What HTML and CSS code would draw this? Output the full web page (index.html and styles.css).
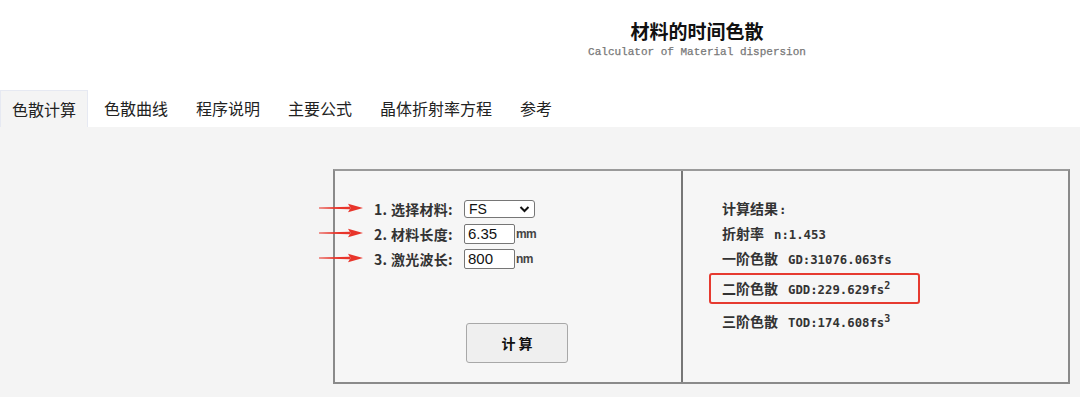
FILE: index.html
```html
<!DOCTYPE html>
<html lang="zh">
<head>
<meta charset="utf-8">
<title>材料的时间色散</title>
<link rel="stylesheet" href="styles.css">
</head>
<body>
<header class="header">
  <h1 class="title">材料的时间色散</h1>
  <div class="subtitle">Calculator of Material dispersion</div>
</header>
<nav class="tabs">
  <div class="tab active">色散计算</div>
  <div class="tab">色散曲线</div>
  <div class="tab">程序说明</div>
  <div class="tab">主要公式</div>
  <div class="tab">晶体折射率方程</div>
  <div class="tab">参考</div>
</nav>
<main class="main">
  <div class="box">
    <div class="cell inputs">
      <div class="row">
        <svg class="arrow" width="44" height="10" viewBox="0 0 44 10"><path d="M0 4.6 L31 3.8 L31 6.2 L0 5.4 Z" fill="#e8352b"/><path d="M29 0.8 L44 5 L29 9.2 L31.5 5 Z" fill="#e8352b"/></svg>
        <span class="label">1. 选择材料:</span>
        <div class="select"><span>FS</span><svg width="11" height="8" viewBox="0 0 11 8"><path d="M1.5 2 L5.5 6 L9.5 2" fill="none" stroke="#111" stroke-width="2"/></svg></div>
      </div>
      <div class="row">
        <svg class="arrow" width="44" height="10" viewBox="0 0 44 10"><path d="M0 4.6 L31 3.8 L31 6.2 L0 5.4 Z" fill="#e8352b"/><path d="M29 0.8 L44 5 L29 9.2 L31.5 5 Z" fill="#e8352b"/></svg>
        <span class="label">2. 材料长度:</span>
        <div class="field">6.35</div><span class="unit">mm</span>
      </div>
      <div class="row">
        <svg class="arrow" width="44" height="10" viewBox="0 0 44 10"><path d="M0 4.6 L31 3.8 L31 6.2 L0 5.4 Z" fill="#e8352b"/><path d="M29 0.8 L44 5 L29 9.2 L31.5 5 Z" fill="#e8352b"/></svg>
        <span class="label">3. 激光波长:</span>
        <div class="field">800</div><span class="unit">nm</span>
      </div>
      <button class="calc">计 算</button>
    </div>
    <div class="cell results">
      <div class="line">计算结果<span class="c">:</span></div>
      <div class="line">折射率<span class="v">n:1.453</span></div>
      <div class="line">一阶色散<span class="v">GD:31076.063fs</span></div>
      <div class="line hl">二阶色散<span class="v">GDD:229.629fs<sup>2</sup></span></div>
      <div class="line">三阶色散<span class="v">TOD:174.608fs<sup>3</sup></span></div>
    </div>
  </div>
</main>
</body>
</html>
```
FILE: styles.css
```css
* { box-sizing: border-box; }
html, body { margin: 0; padding: 0; }
body {
  width: 1080px;
  height: 397px;
  overflow: hidden;
  background: #fff;
  font-family: "Noto Sans CJK SC", "Liberation Sans", sans-serif;
  color: #222;
}
.header {
  height: 90px;
  padding: 20px 0 0 314px;
  text-align: center;
}
.title {
  margin: 0;
  font-size: 19px;
  line-height: 22px;
  font-weight: 700;
  color: #111;
}
.subtitle {
  margin-top: 3px;
  font-family: "Liberation Mono", monospace;
  font-size: 11px;
  line-height: 14px;
  color: #777;
  -webkit-text-stroke: 0.25px #777;
}
.tabs {
  display: flex;
  gap: 4px;
  height: 37px;
}
.tab {
  padding: 0 12px;
  line-height: 37px;
  font-size: 16px;
  color: #222;
}
.tab.active {
  background: #f4f4f4;
  border: 1px solid #e6e9f2;
  border-bottom: none;
  padding: 0 11px;
  line-height: 36px;
}
.main {
  height: 270px;
  background: #f4f4f4;
  padding: 42px 0 0 333px;
}
.box {
  width: 737px;
  height: 215px;
  border: 2px solid #8a8a8a;
  border-top-color: #9a9a9a;
  display: grid;
  grid-template-columns: 346px 1fr;
  background: #f6f6f6;
}
.cell { position: relative; }
.inputs { padding: 25px 0 0 39px; }
.row {
  position: relative;
  display: flex;
  align-items: center;
  height: 25px;
}
.arrow {
  position: absolute;
  left: -55px;
  top: 7px;
}
.label {
  width: 90px;
  font-size: 14px;
  font-weight: 700;
  color: #333;
  letter-spacing: 0.3px;
}
.select {
  width: 71px;
  height: 18px;
  border: 1px solid #767676;
  border-radius: 3px;
  background: #fff;
  display: flex;
  align-items: center;
  justify-content: space-between;
  padding: 0 4px 0 4px;
  font-family: "Liberation Sans", sans-serif;
  font-size: 14px;
  color: #111;
}
.field {
  width: 51px;
  height: 20px;
  border: 1px solid #767676;
  border-radius: 2px;
  background: #fff;
  padding: 0 3px;
  font-family: "Liberation Sans", sans-serif;
  font-size: 15px;
  line-height: 18px;
  color: #111;
}
.unit {
  margin-left: 1px;
  font-family: "Liberation Sans", sans-serif;
  font-size: 12px;
  font-weight: 700;
  color: #444;
  letter-spacing: -0.6px;
}
.calc {
  display: block;
  margin: 52px 0 0 92px;
  width: 102px;
  height: 40px;
  background: #efefef;
  border: 1px solid #a8a8a8;
  border-radius: 3px;
  font-family: "Noto Sans CJK SC", sans-serif;
  font-size: 14px;
  font-weight: 700;
  color: #111;
  padding: 0;
}
.results {
  border-left: 2px solid #777;
  padding: 25px 0 0 39px;
}
.line {
  height: 25px;
  line-height: 25px;
  font-size: 14px;
  font-weight: 700;
  color: #333;
  white-space: nowrap;
}
.c {
  font-family: "DejaVu Sans Mono", monospace;
  font-size: 12.3px;
  margin-left: 1px;
}
.v {
  margin-left: 10px;
  font-family: "DejaVu Sans Mono", monospace;
  font-size: 12.3px;
  font-weight: 700;
}
.v sup {
  font-size: 10px;
  line-height: 0;
}
.hl {
  width: 211px;
  height: 31px;
  margin: 2px 0 5px -13px;
  padding: 1px 11px;
  border: 2px solid #e63a30;
  border-radius: 3px;
}
```
